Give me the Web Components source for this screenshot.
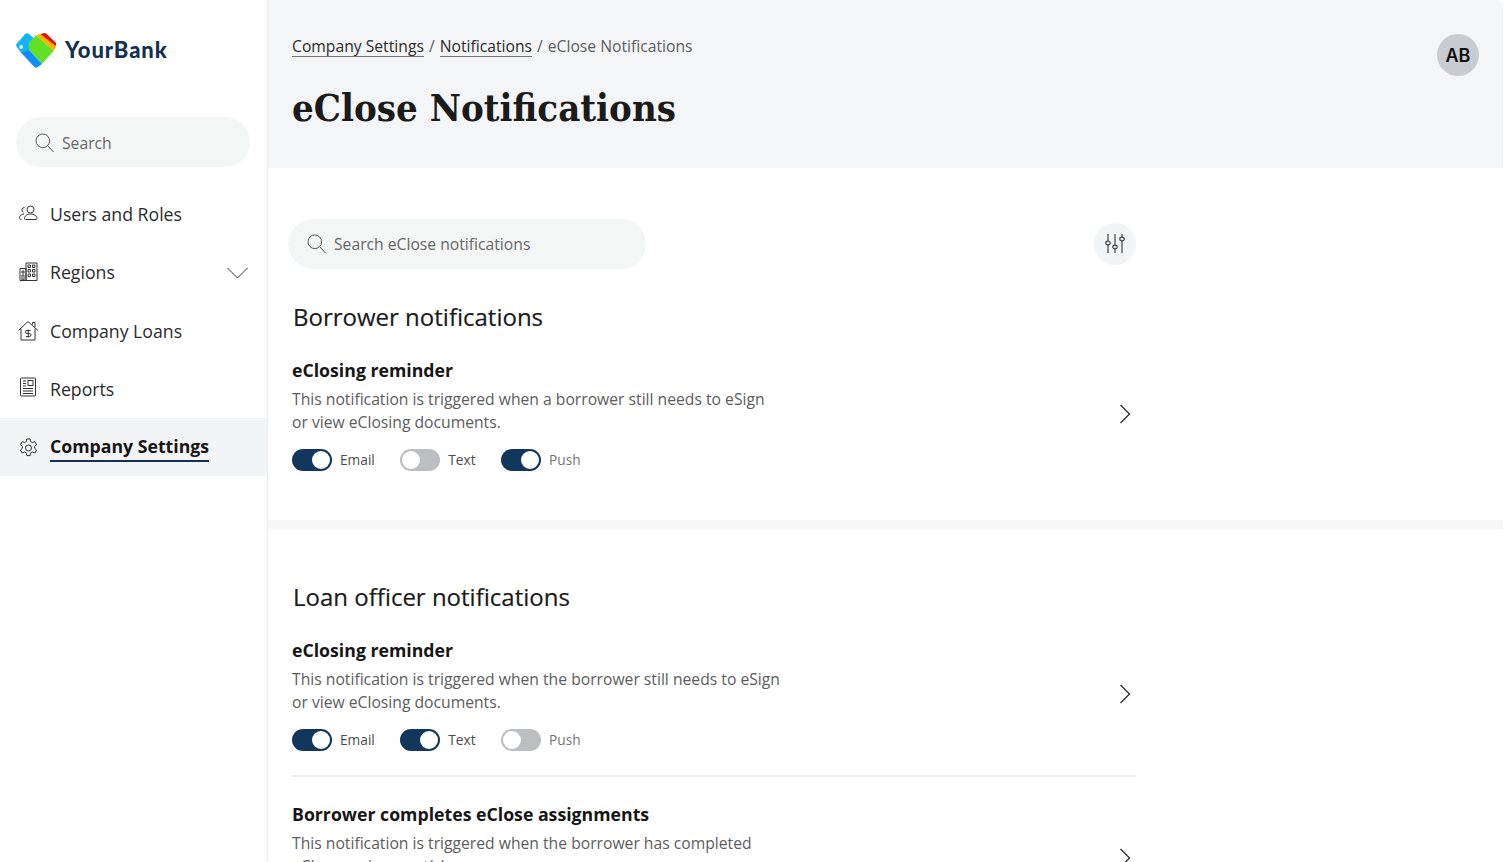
<!DOCTYPE html>
<html><head><meta charset="utf-8"><title>eClose Notifications</title>
<style>
html,body{margin:0;height:862px;overflow:hidden;background:#fff;font-family:"Open Sans",sans-serif;color:#1a1a1a}
app-shell{height:862px}
</style></head><body>
<template id="t-shell"><style>
:host{display:flex;width:1504px;height:862px;overflow:hidden;background:#fff;position:relative}
.side{flex:0 0 267px;box-sizing:border-box;position:relative;z-index:1;box-shadow:1px 0 1px rgba(0,0,0,.07);background:#fff}
.main{flex:1;min-width:0;display:flex;flex-direction:column;margin-left:1px}
.frame{position:absolute;inset:0 1px 0 0;border-radius:8px;box-shadow:0 0 0 12px #fff;pointer-events:none;z-index:2}
</style><div class="side"><slot name="side"></slot></div><div class="main"><slot></slot></div><div class="frame"></div></template>

<template id="t-logo"><style>
:host{display:flex;align-items:center;gap:9px;height:34px;margin:33px 0 50px 16px}
span{font:900 22px/34px Lato,sans-serif;color:#12304f;letter-spacing:.9px}
svg{display:block}
</style><svg width="40" height="35" viewBox="0 0 40 35">
<path d="M.8 10.500 9 1.200a3 3 0 0 1 4-.2L22 9 13 17 5.500 20.200.8 14a3 3 0 0 1 0-3.500z" fill="#12b4fa"/>
<circle cx="5.200" cy="14" r="1.900" fill="#e6f6ff"/>
<path d="M24.300 1 27.500.2a3 3 0 0 1 3 .6l8.900 8.400a2.500 2.500 0 0 1 .6 2.800L38 15z" fill="#dc1a0a"/>
<path d="M20 2.300 24.300 1 40 13.300l-2.300 4.400z" fill="#ffb000"/>
<path d="M12.700 10 20 2.300l17.700 15.400L26 31 12.700 16.700z" fill="#63e024"/>
<path d="M12.700 16.700 26 31l-4.300 3a2.500 2.500 0 0 1-3.300 0L5.300 20z" fill="#0f8dff"/>
</svg><span><slot></slot></span></template>

<template id="t-search"><style>
:host{display:flex;align-items:center;box-sizing:border-box;height:50px;border-radius:25px;background:#f4f6f6;padding-left:19px;gap:8px;color:#666;font:15.700px/22px "Open Sans",sans-serif}
svg{display:block;flex:none}
</style><svg width="19" height="20" viewBox="0 0 19 20" fill="none" stroke="#555" stroke-width="1"><circle cx="7.800" cy="7.800" r="6.800"/><path d="m12.800 12.800 5.700 6.200"/></svg><span><slot></slot></span></template>

<template id="t-nav"><style>
:host{display:flex;align-items:center;box-sizing:border-box;height:58.300px;padding-left:18px;gap:11px;font:17.700px/26px "Open Sans",sans-serif;color:#2b2b2b;position:relative}
:host([active]){background:#f3f4f6;font-weight:700;color:#161616;padding-bottom:3px}
.ic{width:21px;height:22px;flex:none;display:flex;position:relative;top:var(--iy,0)}
:host([active]) .ic{top:2px}
.lab{position:relative}
:host([active]) .lab::after{content:"";position:absolute;left:0;right:0;bottom:-3px;height:2px;background:#12304f}
.chev{position:absolute;right:19px;top:24px;display:none}
:host([expand]) .chev{display:block}
</style><span class="ic"><slot name="icon"></slot></span><span class="lab"><slot></slot></span>
<svg class="chev" width="21" height="12" viewBox="0 0 21 12" fill="none" stroke="#333" stroke-width="1"><path d="M.5 1l10 10 10-10"/></svg></template>

<template id="t-header"><style>
:host{display:flex;justify-content:space-between;box-sizing:border-box;height:168px;background:#f4f5f6;padding:33px 25px 0 24px}
.bc{font:15.700px/26px "Open Sans",sans-serif;color:#5d5d5d;display:flex;gap:5px;height:26px}
h1{margin:24px 0 0;font:700 38px/50px "DejaVu Serif Condensed","DejaVu Serif",serif;font-stretch:condensed;color:#1b1b1b}
.av{width:42px;height:42px;border-radius:50%;background:#c8ccd0;font:600 18px/44px "Inter",sans-serif;color:#111;text-align:center;margin-top:1px}
::slotted(a){color:#2b2b2b;text-decoration:none;border-bottom:1px solid #777;height:23px}
</style><div><div class="bc"><slot name="bc"></slot></div><h1><slot></slot></h1></div><div class="av">AB</div></template>

<template id="t-section"><style>
:host{display:block;box-sizing:border-box;padding:0 0 0 24px}
h2{margin:0;font:500 24px/31px "Open Sans",sans-serif;color:#1b1b1b;padding:0 0 1px 1px;-webkit-text-stroke:.2px #1b1b1b}
.wrap{width:844px}
</style><div class="wrap"><slot name="top"></slot><h2><slot name="title"></slot></h2><slot></slot></div></template>

<template id="t-tools"><style>
:host{display:flex;justify-content:space-between;align-items:center;height:50px;margin:51px 0 32px -4px}
.f{width:42px;height:42px;border-radius:50%;background:#f3f4f5;display:flex;align-items:center;justify-content:center}
::slotted(notif-search){width:358px}
svg{position:relative;top:-.5px}
</style><slot></slot><div class="f"><svg width="20" height="21" viewBox="0 0 20 21" fill="none" stroke="#444" stroke-width="1.200"><path d="M3 1v7M3 12v8M10 1v11M10 16v4M17 1v3M17 8v12"/><ellipse cx="3" cy="10" rx="2.200" ry="1.800"/><ellipse cx="10" cy="14" rx="2.200" ry="1.800"/><ellipse cx="17" cy="6" rx="2.200" ry="1.800"/></svg></div></template>

<template id="t-item"><style>
:host{display:flex;align-items:center;justify-content:space-between;box-sizing:border-box;padding-right:5px}
h3{margin:0;font:700 17.700px/26px "Open Sans",sans-serif;color:#161616}
p{margin:5px 0 0;font:15.700px/23px "Open Sans",sans-serif;color:#5c5c5c;width:490px}
.tg{display:flex;gap:25.500px;margin-top:15px}
svg{flex:none;display:block}
</style><div><h3><slot name="title"></slot></h3><p><slot name="desc"></slot></p><div class="tg"><slot></slot></div></div>
<svg width="12" height="20" viewBox="0 0 12 20" fill="none" stroke="#2b2b2b" stroke-width="1.300"><path d="M1.500 1l9 9-9 9"/></svg></template>

<template id="t-toggle"><style>
:host{display:flex;align-items:center;gap:8px;font:13.700px/22px "Open Sans",sans-serif;color:#4b4b4b}
:host([muted]){color:#757575}
.t{width:40px;height:22px;border-radius:11px;background:#bdbebf;position:relative;box-sizing:border-box}
.t::after{content:"";position:absolute;left:2px;top:2px;width:18px;height:18px;border-radius:50%;background:#fff}
:host([on]) .t{background:#12375c}
:host([on]) .t::after{left:20px}
</style><span class="t"></span><slot></slot></template>

<app-shell>
 <div slot="side">
  <bank-logo>YourBank</bank-logo>
  <notif-search style="margin:0 17px 18px 16px;padding-top:1px">Search</notif-search>
  <nav-item><svg slot="icon" width="21" height="22" viewBox="0 0 21 22" fill="none" stroke="#333" stroke-width="1"><circle cx="12.500" cy="6.500" r="3.500"/><path d="M6.500 15.500c0-2.800 2.700-4.500 6-4.500s6.500 1.700 6.500 4.500c0 .7-.5 1-1 1H7.500c-.6 0-1-.3-1-1zM6.500 4.500a2.500 2.500 0 0 0-1 4.800M6 11c-2.500.2-4.500 1.600-4.500 3.800 0 1 .6 1.700 2 1.700"/></svg>Users and Roles</nav-item>
  <nav-item expand style="--iy:-1px"><svg slot="icon" width="21" height="22" viewBox="0 0 21 22" fill="none" stroke="#333" stroke-width="1"><path d="M2 8.500h6v12H2zM8 3h11v17.500H8zM4 11h2v2H4zM4 15h2v5H4zM10 5h2.500v2.500H10zM14.500 5H17v2.500h-2.500zM10 9.500h2.500V12H10zM14.500 9.500H17V12h-2.500zM10 14h2.500v2.500H10zM14.500 14H17v2.500h-2.500z"/></svg>Regions</nav-item>
  <nav-item><svg slot="icon" width="21" height="22" viewBox="0 0 21 22" fill="none" stroke="#333" stroke-width="1"><path d="M.5 10.500 10 1.500l10 9M3 8.500V20h14V8.500M14.500 4.500V2.500H17v4.500"/><path d="M12.500 10.500H9a1.200 1.200 0 0 0 0 3h2.500a1.200 1.200 0 0 1 0 3H8M10.300 9.500v8"/></svg>Company Loans</nav-item>
  <nav-item style="--iy:-2px"><svg slot="icon" width="21" height="22" viewBox="0 0 21 22" fill="none" stroke="#333" stroke-width="1"><rect x="2.500" y="2" width="15" height="18" rx="1"/><rect x="10" y="4.500" width="5" height="5"/><path d="M5 5h3M5 7.500h3M5 10h3M5 12.500h10M5 15h10M5 17.500h10"/></svg>Reports</nav-item>
  <nav-item active style="height:58px"><svg slot="icon" width="21" height="22" viewBox="0 0 21 22" fill="none" stroke="#333" stroke-width="1"><circle cx="10.500" cy="11" r="3"/><path d="M8.800 2h3.400l.5 2.700 1.700.9 2.500-1 1.700 3-2 1.700v2l2 1.700-1.700 3-2.500-1-1.700.9-.5 2.700H8.800l-.5-2.700-1.700-.9-2.500 1-1.700-3 2-1.700v-2l-2-1.700 1.700-3 2.500 1 1.700-.9z"/></svg>Company Settings</nav-item>
 </div>
 <page-header><a slot="bc">Company Settings</a><span slot="bc">/</span><a slot="bc">Notifications</a><span slot="bc">/</span><span slot="bc">eClose Notifications</span>eClose Notifications</page-header>
 <notif-section style="height:352px">
  <notif-tools slot="top"><notif-search>Search eClose notifications</notif-search></notif-tools>
  <span slot="title">Borrower notifications</span>
  <notif-item style="margin-top:24px">
   <span slot="title">eClosing reminder</span>
   <span slot="desc">This notification is triggered when a borrower still needs to eSign or view eClosing documents.</span>
   <notif-toggle on>Email</notif-toggle><notif-toggle>Text</notif-toggle><notif-toggle on muted>Push</notif-toggle>
  </notif-item>
 </notif-section>
 <div style="height:9px;background:#f7f7f7;flex:none"></div>
 <notif-section style="padding-top:52px;flex:1;overflow:hidden">
  <span slot="title">Loan officer notifications</span>
  <notif-item style="margin-top:24px">
   <span slot="title">eClosing reminder</span>
   <span slot="desc">This notification is triggered when the borrower still needs to eSign or view eClosing documents.</span>
   <notif-toggle on>Email</notif-toggle><notif-toggle on>Text</notif-toggle><notif-toggle muted>Push</notif-toggle>
  </notif-item>
  <div style="height:2px;background:#eeeeee;margin:24px 0 24px"></div>
  <notif-item>
   <span slot="title">Borrower completes eClose assignments</span>
   <span slot="desc">This notification is triggered when the borrower has completed eClose assignment(s).</span>
   <notif-toggle on>Email</notif-toggle><notif-toggle on>Text</notif-toggle><notif-toggle muted>Push</notif-toggle>
  </notif-item>
 </notif-section>
</app-shell>
<script>
const reg=(n,t)=>customElements.define(n,class extends HTMLElement{constructor(){super();this.attachShadow({mode:"open"}).appendChild(document.getElementById(t).content.cloneNode(true));}});
reg("app-shell","t-shell");reg("bank-logo","t-logo");reg("notif-search","t-search");reg("nav-item","t-nav");reg("page-header","t-header");reg("notif-section","t-section");reg("notif-tools","t-tools");reg("notif-item","t-item");reg("notif-toggle","t-toggle");
</script>
</body></html>
